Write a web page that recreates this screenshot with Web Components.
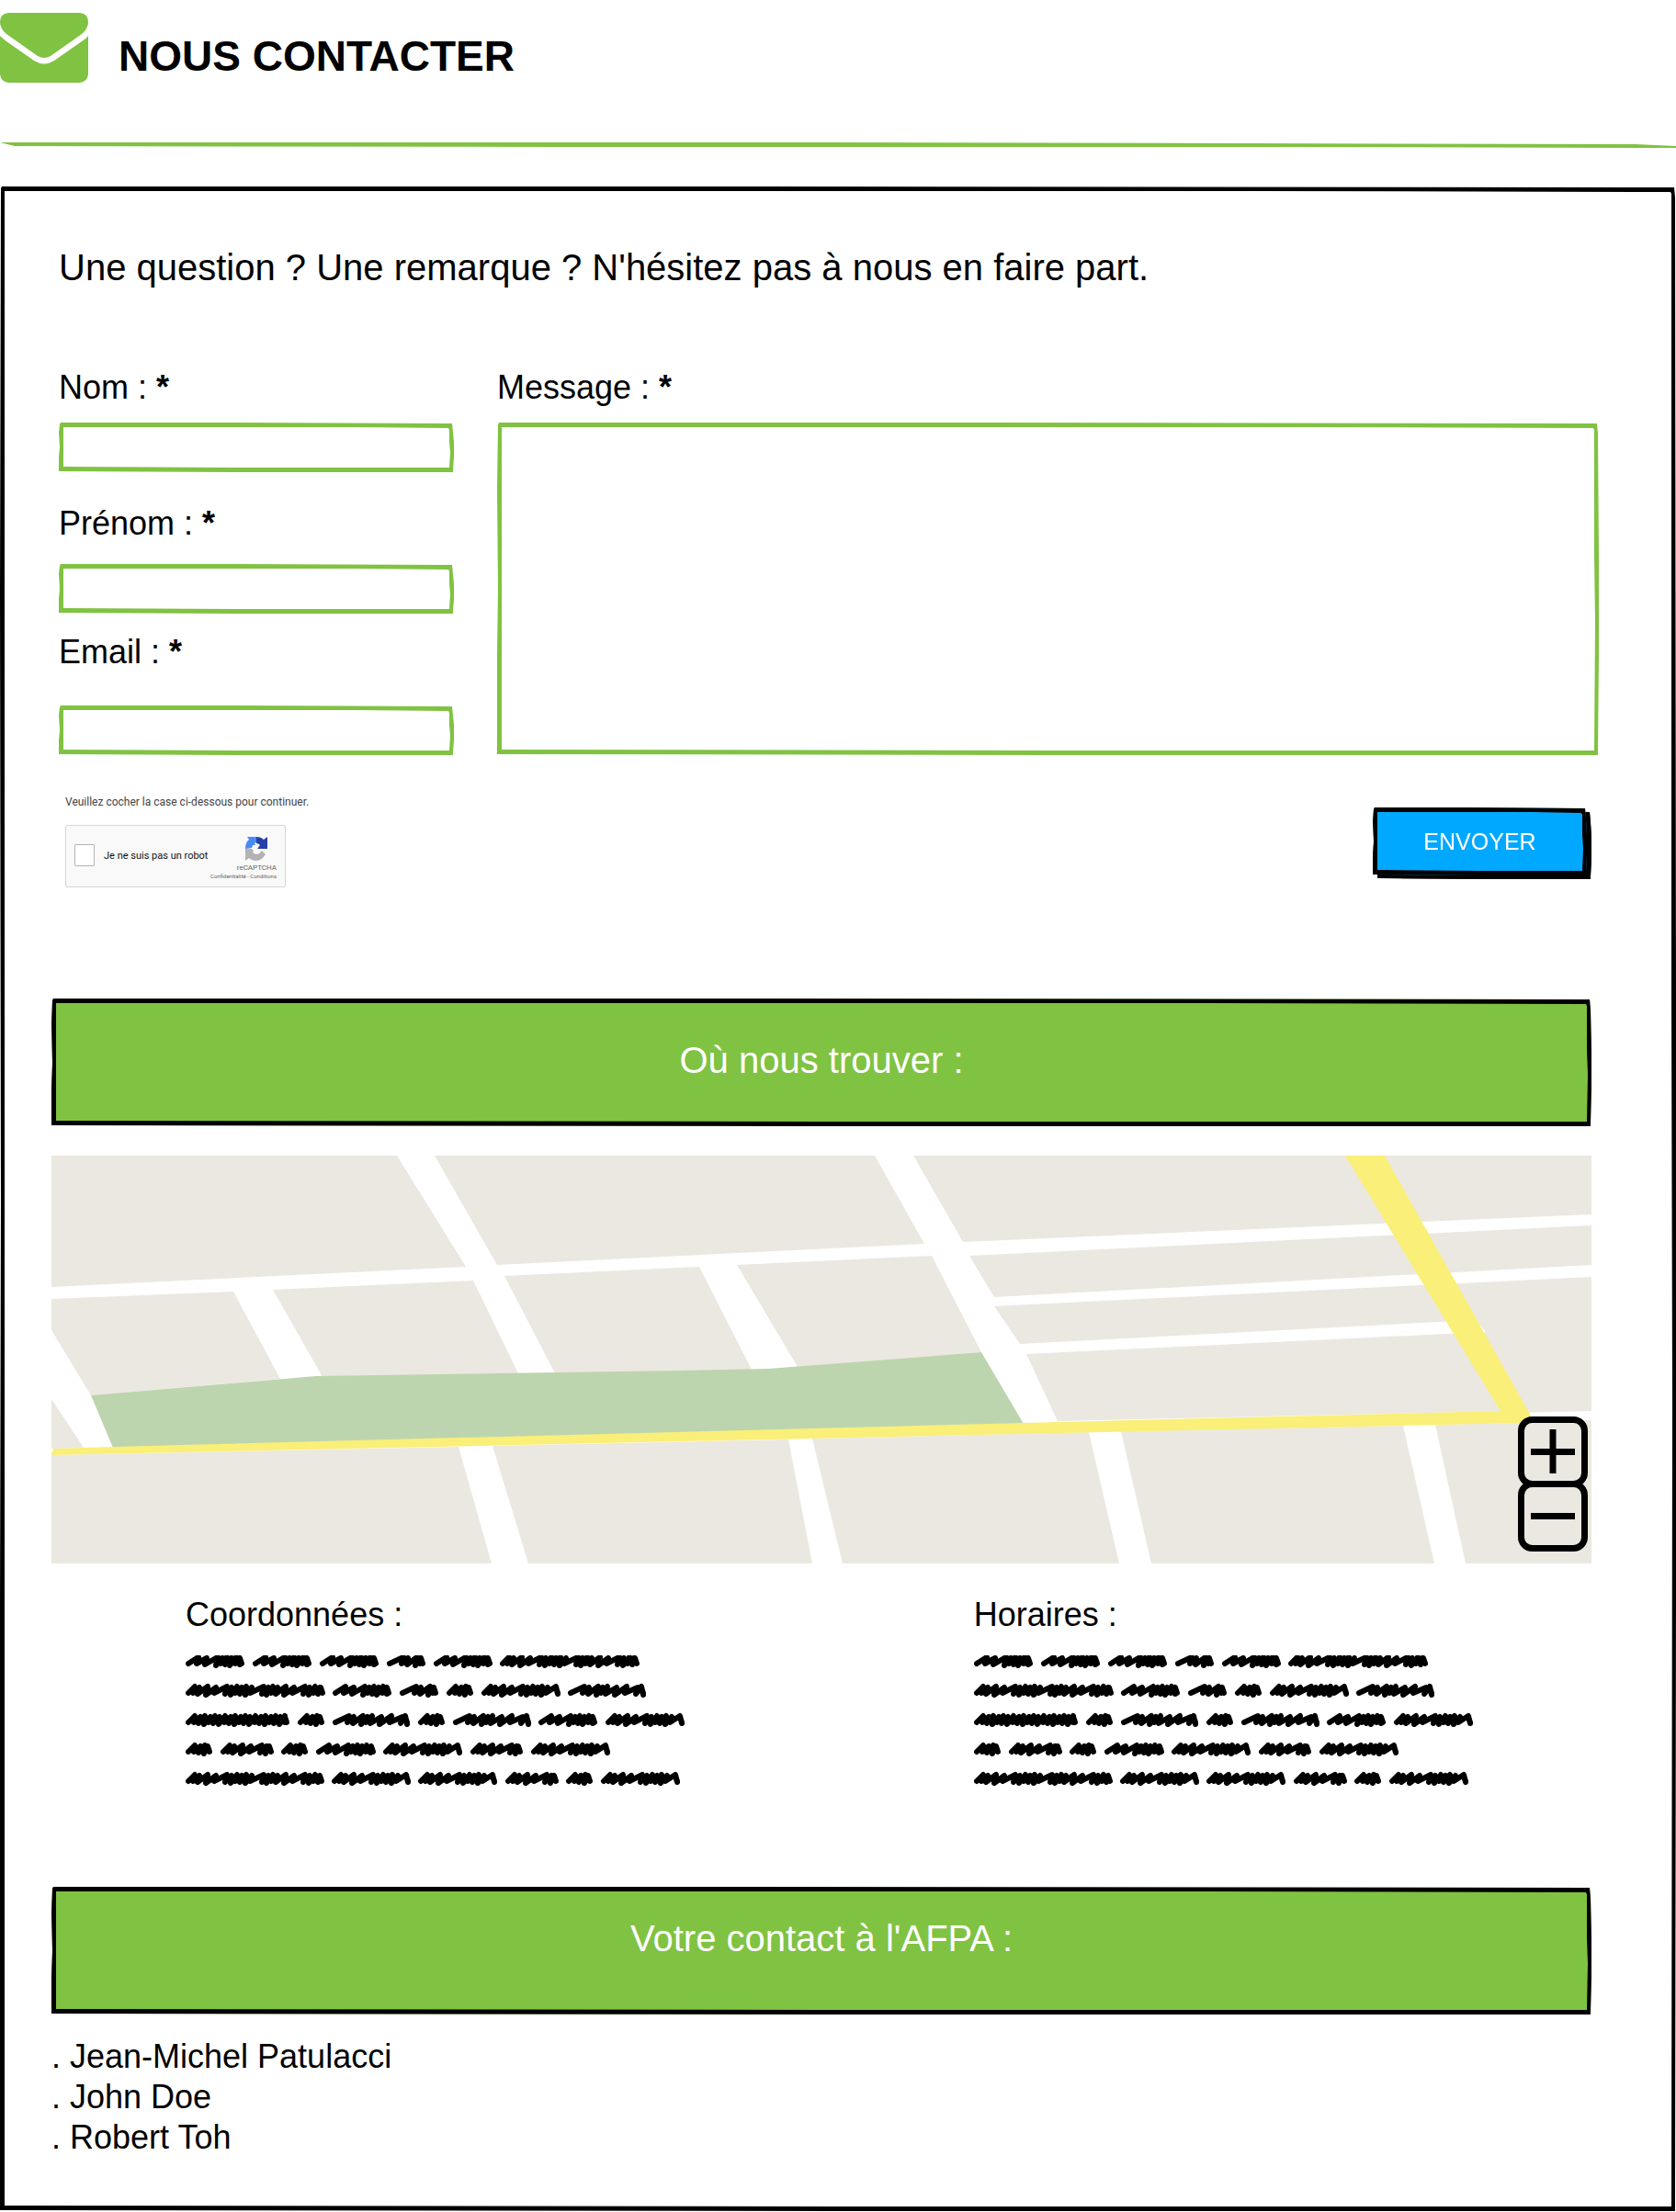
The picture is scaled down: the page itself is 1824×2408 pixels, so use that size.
<!DOCTYPE html>
<html lang="fr">
<head>
<meta charset="utf-8">
<meta name="viewport" content="width=device-width, initial-scale=1">
<title>Nous contacter</title>
<style>
  html, body { margin: 0; background: #fff; }
  body {
    font-family: "Liberation Sans", Arial, sans-serif;
    color: #000;
    --green: #80c242;
    --blue: #00a9ff;
  }
</style>
</head>
<body>
<contact-page></contact-page>

<script>
const define = (name, html, setup) => {
  const tpl = document.createElement('template');
  tpl.innerHTML = html;
  customElements.define(name, class extends HTMLElement {
    constructor() {
      super();
      this.attachShadow({ mode: 'open' }).append(tpl.content.cloneNode(true));
    }
    connectedCallback() { if (setup) setup(this, this.shadowRoot); }
  });
};

/* Box with a hand-drawn outline that follows its own size. */
define('sketch-box', `
  <style>
    :host { display: block; position: relative; --ink: #000; --fill: none; }
    svg { position: absolute; inset: 0; width: 100%; height: 100%; overflow: visible; pointer-events: none; }
    .content { position: relative; height: 100%; }
    .fill { fill: var(--fill); }
    .ring { fill: var(--ink); fill-rule: evenodd; }
  </style>
  <svg aria-hidden="true"><path class="fill"/><path class="ring"/></svg>
  <div class="content"><slot></slot></div>`,
  (host, root) => {
    const draw = () => {
      const w = host.clientWidth, h = host.clientHeight;
      const outer = `M2 0L${w * .45} 0L${w - 2} 1L${w - 1} ${Math.min(12, h * .2)}L${w} ${h * .4}L${w} ${h * .7}L${w - 1} ${h - 3}L${w - 1} ${h}L${w * .5} ${h}L0 ${h - 1}L0 ${h * .7}L1 ${h * .5}L0 ${h * .2}L1 2Z`;
      const inner = `M5 5L${w * .4} 5L${w * .75} 5L${w - 6} 6L${w - 5} 8L${w - 5} ${h * .4}L${w - 4} ${h * .6}L${w - 5} ${h - 5}L${w * .5} ${h - 5}L5 ${h - 6}L5 ${h * .3}Z`;
      root.querySelector('.fill').setAttribute('d', outer);
      root.querySelector('.ring').setAttribute('d', outer + inner);
    };
    draw();
    new ResizeObserver(draw).observe(host);
  });

define('page-header', `
  <style>
    :host { display: block; }
    header { display: flex; align-items: flex-start; gap: 33px; padding-top: 14px; height: 141px; }
    .mail { width: 96px; height: 76px; fill: var(--green); flex: none; }
    h1 { margin: 19px 0 0; font-size: 46px; line-height: 56px; font-weight: 700; }
    .rule { display: block; width: 100%; height: 6px; fill: var(--green); }
  </style>
  <header>
    <svg class="mail" viewBox="0 0 96 76" aria-hidden="true">
      <path d="M9 0H87Q96 1 96 10Q96 17 89 23L55 47Q48 51 41 47L7 23Q0 17 0 10Q0 1 9 0Z"/>
      <path d="M0 25Q3 28 7 31L37 52Q48 59 59 52L89 31Q94 28 96 25V67Q95 75 87 76H9Q1 75 0 67Z"/>
    </svg>
    <h1><slot></slot></h1>
  </header>
  <svg class="rule" viewBox="0 0 1824 6" preserveAspectRatio="none" aria-hidden="true">
    <path d="M0 0L900 0L1780 2L1824 4L1824 6L1400 5L600 5L16 4Z"/>
  </svg>`);

define('form-field', `
  <style>
    :host { display: flex; flex-direction: column; gap: var(--label-gap, 16px); }
    label { font-size: 36px; line-height: 44px; }
    sketch-box { height: 54px; --ink: var(--green); }
    :host([multiline]) sketch-box { flex: 1; }
    input, textarea {
      display: block; box-sizing: border-box; width: 100%; height: 100%; margin: 0;
      padding: 8px 16px; border: 0; background: none; outline: 0; resize: none;
      font: 28px "Liberation Sans", Arial, sans-serif; color: inherit;
    }
  </style>
  <label for="control"><slot></slot> : <b>*</b></label>
  <sketch-box></sketch-box>`,
  (host, root) => {
    const box = root.querySelector('sketch-box');
    if (box.firstChild) return;
    const control = document.createElement(host.hasAttribute('multiline') ? 'textarea' : 'input');
    control.id = 'control';
    control.name = host.getAttribute('name');
    control.required = true;
    if (control.localName === 'input') control.type = host.getAttribute('type') || 'text';
    box.append(control);
  });

define('captcha-box', `
  <style>
    :host { display: block; font-family: Roboto, "Liberation Sans", sans-serif; color: #444; }
    p { margin: 0 0 17px; font-size: 12px; line-height: 16px; }
    .card {
      box-sizing: border-box; width: 240px; height: 68px; padding: 0 9px;
      display: flex; align-items: center; gap: 10px;
      background: #f9f9f9; border: 1px solid #d6d6d6; border-radius: 2px;
    }
    input {
      appearance: none; flex: none; box-sizing: border-box; width: 22px; height: 24px; margin: 0 0 2px;
      border: 1px solid #b4b4b4; background: #fff; border-radius: 1px;
    }
    label { flex: 1; font-size: 11px; line-height: 16px; color: #111; white-space: nowrap; }
    .brand { display: flex; flex-direction: column; align-items: flex-end; color: #666; padding-top: 4px; }
    .brand svg { width: 26px; height: 28px; margin: 0 9px 2px 0; }
    .brand span { font-size: 8px; line-height: 10px; }
    .brand small { font-size: 6px; line-height: 8px; white-space: nowrap; }
    .side { width: 44px; display: flex; justify-content: flex-end; }
  </style>
  <p>Veuillez cocher la case ci-dessous pour continuer.</p>
  <div class="card">
    <input type="checkbox" id="robot"><label for="robot">Je ne suis pas un robot</label>
    <div class="side"><div class="brand">
      <svg viewBox="0 0 26 28" aria-hidden="true">
        <path fill="#4a8af4" d="M1 14Q1 7 5 4L3 1H13V7L11 8L12 10L9 10L8 13L1 14Z"/>
        <path fill="#2440a8" d="M13 1Q18 1 21 4L25 1V14H14L17 10Q15 8 13 8Z"/>
        <path fill="#b3b3b3" d="M1 14L8 14L10 16L9 18Q11 20 14 20Q17 19 19 16L23 20Q19 27 13 27Q8 27 5 24L1 27Z"/>
      </svg>
      <span>reCAPTCHA</span>
      <small>Confidentialité - Conditions</small>
    </div></div>
  </div>`);

define('send-button', `
  <style>
    :host { display: block; padding: 0 5px 5px 0; }
    sketch-box { width: 233px; height: 74px; --fill: var(--blue); filter: drop-shadow(5px 4px 0 #000); }
    button {
      display: block; width: 100%; height: 100%; padding: 0; border: 0; background: none; cursor: pointer;
      font: 25px "Liberation Sans", Arial, sans-serif; color: #fff;
    }
  </style>
  <sketch-box><button type="submit"><slot></slot></button></sketch-box>`);

define('contact-form', `
  <style>
    :host { display: block; padding: 64px 84px 0 64px; }
    p { margin: 0 0 85px; font-size: 40px; line-height: 48px; }
    .fields { display: flex; gap: 47px; }
    .identity { width: 430px; flex: none; display: flex; flex-direction: column; }
    .identity form-field:nth-child(2) { margin-top: 34px; --label-gap: 22px; }
    .identity form-field:nth-child(3) { margin-top: 20px; --label-gap: 36px; }
    .message { flex: 1; }
    .actions { display: flex; justify-content: space-between; align-items: flex-start; padding: 43px 8px 0 7px; }
    send-button { margin-top: 14px; }
  </style>
  <form onsubmit="return false">
    <p>Une question ? Une remarque ? N'hésitez pas à nous en faire part.</p>
    <div class="fields">
      <div class="identity">
        <form-field name="nom">Nom</form-field>
        <form-field name="prenom">Prénom</form-field>
        <form-field name="email" type="email">Email</form-field>
      </div>
      <form-field class="message" name="message" multiline>Message</form-field>
    </div>
    <div class="actions">
      <captcha-box></captcha-box>
      <send-button>ENVOYER</send-button>
    </div>
  </form>`);

define('section-banner', `
  <style>
    :host { display: block; }
    sketch-box { height: 139px; --fill: var(--green); }
    h2 {
      margin: 0; box-sizing: border-box; height: 100%; padding: var(--banner-pad, 43px) 0 0;
      text-align: center; font-size: 40px; line-height: 48px; font-weight: 400; color: #fff;
    }
  </style>
  <sketch-box><h2><slot></slot></h2></sketch-box>`);

define('street-map', `
  <style>
    :host { display: block; position: relative; }
    .map { display: block; width: 100%; height: auto; }
    .zoom { position: absolute; right: 4px; bottom: 13px; display: flex; flex-direction: column; }
    button { display: block; width: 76px; height: 77px; padding: 0; border: 0; background: none; cursor: pointer; }
    button + button { margin-top: -7px; }
    button svg { display: block; width: 76px; height: 77px; fill: none; stroke: #000; stroke-width: 7; }
  </style>
  <svg class="map" viewBox="0 0 1676 444" role="img" aria-label="Plan du quartier">
    <rect width="1676" height="444" fill="#fff"/>
    <g fill="#ebe8e1">
      <path d="M0 0H376L451 121L0 143Z"/>
      <path d="M417 0H896L950 96L485 119Z"/>
      <path d="M938 0H1676V64L992 94Z"/>
      <path d="M0 156L198 148L249 243L43 261L0 190Z"/>
      <path d="M241 146L459 136L508 237L295 241Z"/>
      <path d="M493 131L705 121L762 233L548 237Z"/>
      <path d="M746 119L958 109L1012 214L812 230Z"/>
      <path d="M999 109L1676 76V119L1026 154Z"/>
      <path d="M1026 164L1510 140L1530 180L1054 205Z"/>
      <path d="M1515 140L1676 132V278L1590 280L1545 200L1561 192L1557 187Z"/>
      <path d="M1061 216L1540 193L1590 278L1095 289Z"/>
      <path d="M0 265L35 318L0 319Z"/>
      <path d="M0 326L443 317L479 444H0Z"/>
      <path d="M480 316L802 309L828 444H519Z"/>
      <path d="M828 308L1129 301L1162 444H861Z"/>
      <path d="M1164 300L1471 294L1505 444H1197Z"/>
      <path d="M1506 293L1596 291L1676 288V444H1539Z"/>
    </g>
    <path fill="#bdd5ae" d="M43 261L288 240L684 234L780 232L1012 214L1058 292L67 318Z"/>
    <path fill="#faef78" d="M2 319L67 317L1058 291L1577 278L1408 0H1451L1611 285L1604 291L644 312L0 326Z"/>
  </svg>
  <div class="zoom">
    <button type="button" aria-label="Zoom avant">
      <svg viewBox="0 0 76 77" aria-hidden="true"><rect x="3.5" y="3.5" width="69" height="70" rx="12"/><path stroke-linejoin="round" d="M14 38.5H62M38 14V62"/></svg>
    </button>
    <button type="button" aria-label="Zoom arrière">
      <svg viewBox="0 0 76 77" aria-hidden="true"><rect x="3.5" y="3.5" width="69" height="70" rx="12"/><path d="M14 38.5H62"/></svg>
    </button>
  </div>`);

/* Placeholder paragraph of scribbled words: [start, end, stroke style]. */
const SCRIBBLES = [
  [[0,64,'l'],[73,137,'l'],[146,210,'l'],[219,261,'r'],[270,334,'l'],[342,494,'d']],
  [[0,152,'d'],[160,224,'l'],[233,275,'r'],[284,313,'w'],[322,408,'d'],[416,501,'r']],
  [[0,113,'w'],[122,151,'w'],[160,244,'r'],[253,282,'w'],[291,376,'r'],[384,448,'l'],[457,543,'d']],
  [[0,29,'w'],[38,96,'d'],[104,133,'w'],[142,207,'l'],[215,301,'d'],[310,367,'d'],[376,462,'d']],
  [[0,151,'d'],[159,245,'d'],[253,339,'d'],[348,406,'d'],[414,443,'w'],[452,538,'d']]
];
const PITCH = {
  l: [9, 9, 12, 5, 5, 5, 6, 5],
  r: [13, 6, 9, 5, 5, 10, 11, 12],
  d: [5, 5, 9, 9, 12, 6, 5, 5, 6, 5, 13, 5],
  w: [6, 5, 6, 5, 5, 6]
};
define('scribble-block', `
  <style>
    :host { display: block; }
    h3 { margin: 0; font-size: 36px; line-height: 44px; font-weight: 400; }
    svg { display: block; width: 543px; max-width: 100%; height: 142px; margin-top: 22px; fill: none; stroke: #000; stroke-width: 6; stroke-linecap: round; stroke-linejoin: round; }
  </style>
  <h3><slot></slot></h3>
  <svg viewBox="0 0 543 142" role="img" aria-label="Texte à venir"><path/></svg>`,
  (host, root) => {
    let d = '';
    SCRIBBLES.forEach((words, row) => {
      const top = row * 32 + 2;
      for (const [start, end, style] of words) {
        let x = start + 3, i = 0;
        d += `M${x} ${top + 7}`;
        while (x + 9 < end) {
          const step = PITCH[style][i % PITCH[style].length];
          const peak = Math.min(x + (step > 7 ? step + 2 : 7), end - 5);
          d += `L${peak} ${top + i % 2}`;
          x = Math.min(x + step, end - 3);
          d += `L${x} ${top + 7 + i % 3}`;
          i++;
        }
        d += `L${end - 5} ${top + 1}L${end - 3} ${top + 7}`;
      }
    });
    root.querySelector('path').setAttribute('d', d);
  });

define('contact-page', `
  <style>
    :host { display: block; }
    .frame { margin-top: 42px; }
    .wide { padding: 0 92px 0 56px; }
    section-banner { margin-top: 121px; }
    street-map { margin-top: 32px; }
    .infos { display: grid; grid-template-columns: 56% 1fr; column-gap: 1px; padding: 34px 0 0 146px; }
    .contact { margin-top: 110px; --banner-pad: 32px; }
    ul { list-style: none; margin: 0; padding: 24px 0 58px; font-size: 36px; line-height: 44px; }
  </style>
  <page-header>NOUS CONTACTER</page-header>
  <main>
    <sketch-box class="frame">
      <contact-form></contact-form>
      <div class="wide">
        <section-banner>Où nous trouver :</section-banner>
        <street-map></street-map>
        <div class="infos">
          <scribble-block>Coordonnées :</scribble-block>
          <scribble-block>Horaires :</scribble-block>
        </div>
        <section-banner class="contact">Votre contact à l'AFPA :</section-banner>
        <ul>
          <li>. Jean-Michel Patulacci</li>
          <li>. John Doe</li>
          <li>. Robert Toh</li>
        </ul>
      </div>
    </sketch-box>
  </main>`);
</script>
</body>
</html>
